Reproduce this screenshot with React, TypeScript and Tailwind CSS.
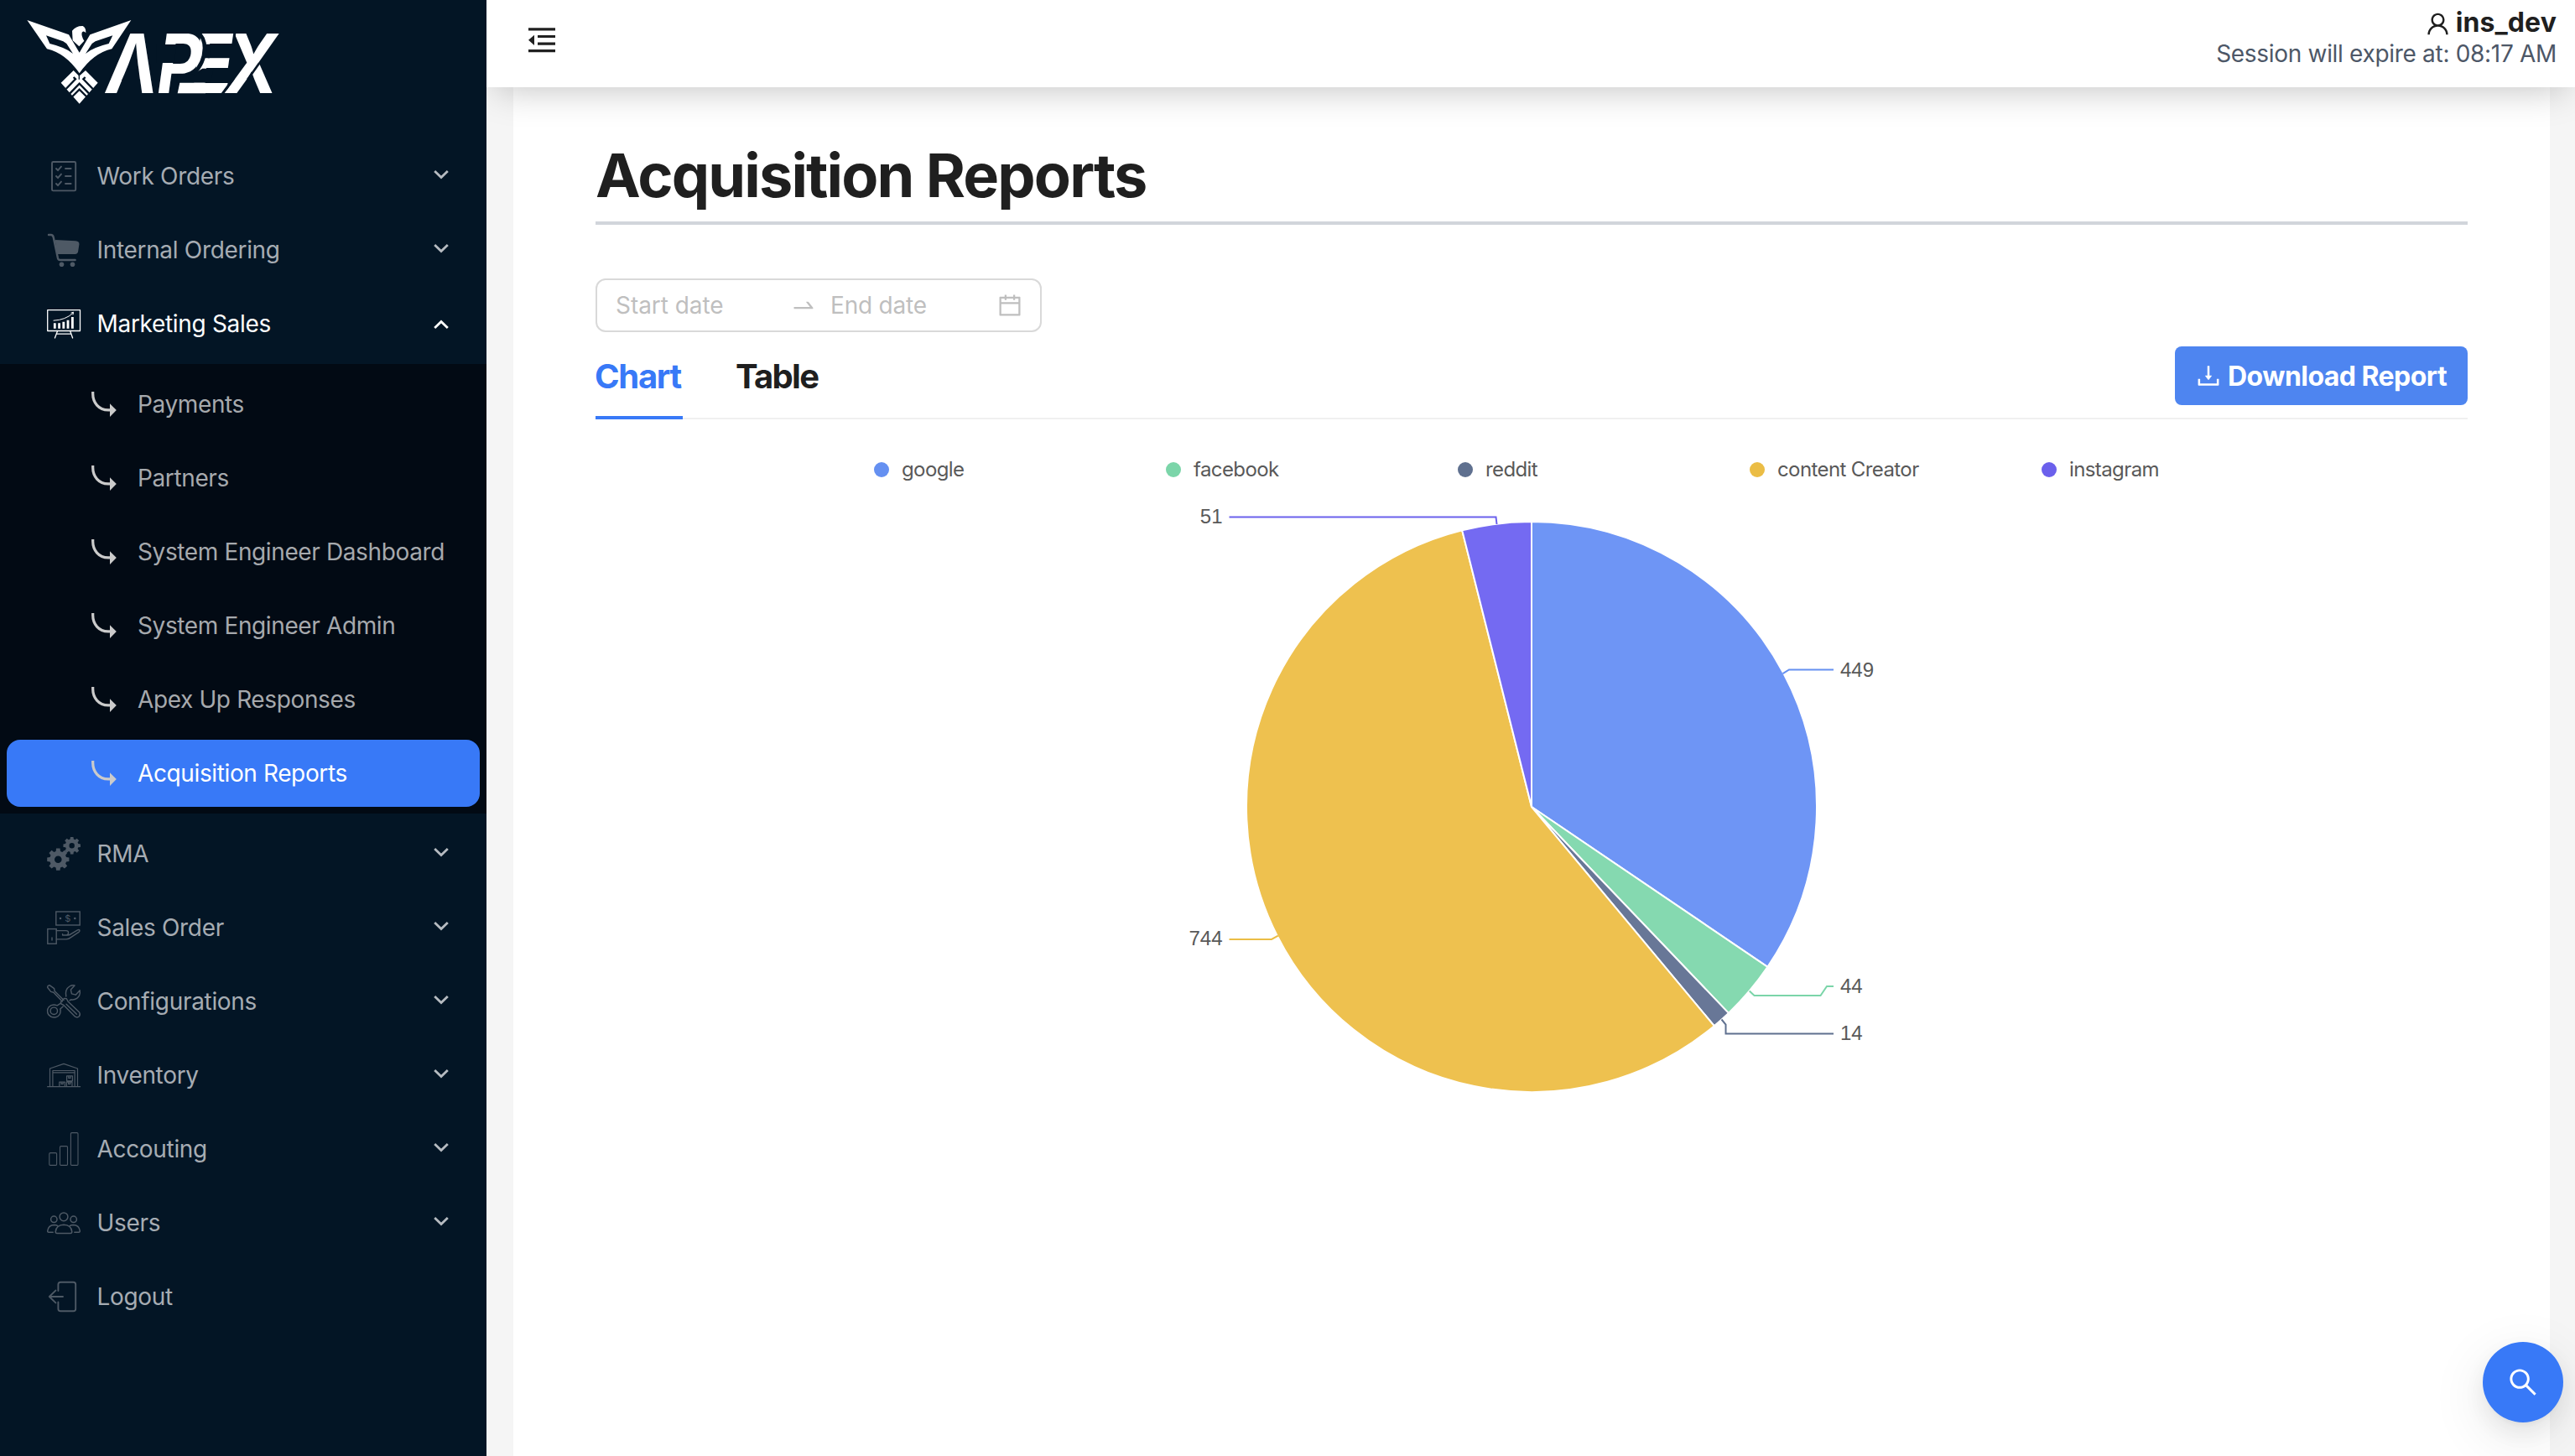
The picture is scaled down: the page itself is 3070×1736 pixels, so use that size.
import type { ReactNode } from "react";
import {
  AiOutlineCalendar,
  AiOutlineDownload,
  AiOutlineSearch,
  AiOutlineSwapRight,
  AiOutlineUser,
} from "react-icons/ai";

/* ---------- Logo ---------- */

function Logo() {
  return (
    <svg viewBox="0 0 960 360" className="h-[120px] w-[320px]" aria-label="Apex">
      <g fill="#fff">
        <path d="M37 24 L186 76 L224 140 L262 76 L409 24 L340 127 Q274 142 224 214 Q174 142 108 127 Z" />
        <path d="M198 62 Q212 44 236 45 Q248 50 247 70 Q240 60 233 68 Q230 80 241 98 L223 118 L200 97 Z" />
        <path d="M203 204 L223 224 L246 204 L290 248 L224 323 L158 248 Z" />
      </g>
      <g fill="#031525">
        <path d="M105 79 L166 100 L178 108 L201 144 Q176 122 118 108 Z" />
        <path d="M343 79 L281 100 L269 108 L246 144 Q271 122 329 108 Z" />
      </g>
      <g fill="none" stroke="#031525" strokeWidth="7">
        <path d="M176 270 L210 235 L203 228 M190 286 L224 251 L258 286 M272 270 L238 235 L245 228" />
        <path d="M196 300 L224 272 L252 300" />
        <path d="M223 222 V236" strokeWidth="4" />
      </g>
      <text
        y="0"
        x="0 216 362 510"
        transform="translate(320 286) scale(0.84 1)"
        fill="#fff"
        fontFamily="Inter, sans-serif"
        fontStyle="italic"
        fontWeight="700"
        fontSize="294"
      >
        APEX
      </text>
      {/* stencil gaps across the wordmark */}
      <g fill="#031525">
        <path d="M392 200H436L441 240H375Z" />
        <path d="M500 111H572L562 177H500Z" />
        <path d="M674 110H696L690 160H672Z" />
        <path d="M632 217L664 197H704L692 248H570L576 218Z" />
      </g>
      <path d="M583 248H675V286H575Z" fill="#fff" />
      <g fill="none" stroke="#031525">
        <path d="M646 66Q672 86 672 124Q671 180 630 218" strokeWidth="14" />
        <path d="M780 66L773 114" strokeWidth="9" />
        <path d="M733 291L776 232" strokeWidth="9" />
        <path d="M868 177L826 236" strokeWidth="8" />
      </g>
    </svg>
  );
}

/* ---------- Sidebar icons (40 x 40) ---------- */

function Glyph({ children, sw = 1.5 }: { children: ReactNode; sw?: number }) {
  return (
    <svg
      viewBox="0 0 40 40"
      className="size-10 shrink-0 overflow-visible"
      fill="none"
      stroke="currentColor"
      strokeWidth={sw}
      strokeLinecap="round"
      strokeLinejoin="round"
    >
      {children}
    </svg>
  );
}

function gear(cx: number, cy: number, r: number, hole: number) {
  const pts: string[] = [];
  const inner = r * 0.76;
  for (let i = 0; i < 8; i++) {
    const a = (i * Math.PI) / 4;
    const at = (rad: number, d: number) =>
      `${(cx + rad * Math.sin(a + d)).toFixed(2)} ${(cy - rad * Math.cos(a + d)).toFixed(2)}`;
    pts.push(at(inner, -0.27), at(r, -0.17), at(r, 0.17), at(inner, 0.27));
  }
  return `M${pts.join("L")}ZM${cx - hole} ${cy}a${hole} ${hole} 0 1 0 ${hole * 2} 0a${hole} ${hole} 0 1 0 ${-hole * 2} 0Z`;
}

const icons: Record<string, ReactNode> = {
  orders: (
    <Glyph sw={1.9}>
      <rect x="6" y="3" width="28.2" height="34.4" rx="1.5" />
      <path d="M11 11l2 2.2 4-4.6M11 20l2 2.2 4-4.6M11 29l2 2.2 4-4.6M22 11h6.6M22 20h6.6M22 29h6.6" />
    </Glyph>
  ),
  cart: (
    <Glyph sw={2.4}>
      <path d="M2 2h2.6q2.6 0 3.2 3.2L13 30q.5 2 2.6 2h18" />
      <path d="M9.6 8l24.6 1.2q4.6.4 4.2 4.4l-1.4 9q-.6 2.4-3 2.4H12Z" fill="currentColor" stroke="none" />
      <circle cx="17.5" cy="37.2" r="2.8" fill="currentColor" stroke="none" />
      <circle cx="30.5" cy="37.2" r="2.8" fill="currentColor" stroke="none" />
    </Glyph>
  ),
  board: (
    <Glyph sw={1.3}>
      <rect x=".7" y="3.7" width="38.8" height="24.8" />
      <path
        d="M7.9 19.3h2.8v6.4H7.9zM13.2 19.3h2.8v6.4h-2.8zM18.4 17.7h2.8v8h-2.8zM23.6 15.7h2.8v10h-2.8zM29 12h2.8v13.7H29z"
        fill="currentColor"
        stroke="none"
      />
      <path d="M8 16.2q14-.6 22.6-8.6M29 7l2.6-.8-.6 2.8" strokeWidth="1" />
      <path d="M12.4 29L9.4 37M27.8 29l2.8 8M11.2 32.2h17.8" />
    </Glyph>
  ),
  gears: (
    <Glyph>
      <path d={gear(13.3, 26.7, 13.3, 4.3)} fill="currentColor" fillRule="evenodd" stroke="none" />
      <path d={gear(29.7, 10.2, 10.4, 3.2)} fill="currentColor" fillRule="evenodd" stroke="none" />
    </Glyph>
  ),
  cash: (
    <Glyph sw={1.4}>
      <rect x="10.8" y="1" width="28.4" height="16" strokeLinejoin="miter" />
      <rect x=".8" y="21.6" width="10.4" height="17.6" strokeLinejoin="miter" />
      <path d="M6 32v3" />
      <path d="M11.3 23.6h11.4q3 .2 2.8 2.6 0 2.8-3.6 2.8H18.6v-1.2M22 29h3q2.4-.2 4-1.6l7.5-4.6q1.8-.7 2.4.4.4 1.2-1 2.2l-9 6q-3 2.5-6 2.5H11.3" />
      <circle cx="16" cy="9" r=".6" fill="currentColor" />
      <circle cx="33.3" cy="9" r=".6" fill="currentColor" />
      <text x="24.7" y="13" fontSize="11" textAnchor="middle" fill="currentColor" stroke="none" fontFamily="Inter, sans-serif">
        $
      </text>
    </Glyph>
  ),
  tools: (
    <Glyph sw={1.4}>
      <path d="M1 1.6l2-1 5.6 4 .6 3.2L20 18.4M1 1.6l-.4 1.6 4 5.2 3.2.8L18.2 20" />
      <path d="M18 19.6l2.4-3.2 3 .4 1.6 3.2 13.6 13q1.6 2.6-.2 4.8-2.2 2-4.8.4L20 24.4l-3-1.4-.6-2.4Z" />
      <path d="M23 23.2l12.4 12" />
      <path d="M22.8 14q-1.6-8.6 4.2-12Q30 .2 33 1l-4.6 5 1 4.8 4.8 1.4 5-5.4q1 6-3.6 9.6-3.2 2.2-7 1.4l-1.6 1" />
      <path d="M16.4 22.2l-4.2 2.6Q6 22.6 2.4 26.4-1 31 1.8 35.8 5.6 40 10.6 38.8q5.6-1.6 5.6-7.8l-.4-2 3.4-3" />
      <circle cx="8.3" cy="31.3" r="4.2" />
    </Glyph>
  ),
  warehouse: (
    <Glyph sw={1.2}>
      <path d="M.6 33.7h39M3.5 33.5V12L20 6.4 36.5 12v21.5" />
      <path d="M6.9 33.5V14.5h26.2v19M7 16.8h26M7 14.5h26" />
      <path d="M23.6 20.8h6.8v6h-6.8zM25.8 21v2.4h2.2V21M14.8 28.2h6.6v5.3h-6.6zM23.4 28.2h6.6v5.3h-6.6zM17 28.4v2h2.2v-2M25.6 28.4v2h2.2v-2" />
    </Glyph>
  ),
  bars: (
    <Glyph sw={1.1}>
      <rect x="2.8" y="24.6" width="8.8" height="14.8" rx="1.2" />
      <rect x="15.5" y="16.6" width="9" height="22.8" rx="1.2" />
      <rect x="28.4" y=".6" width="8.6" height="38.8" rx="1.2" />
    </Glyph>
  ),
  users: (
    <Glyph sw={1.5}>
      <circle cx="20" cy="12.8" r="4.9" />
      <circle cx="8.3" cy="15.8" r="3.7" />
      <circle cx="31.7" cy="15.8" r="3.7" />
      <path d="M12 32.6q-1.8 0-1.8-2 .8-8.2 9.8-8.4 9 .2 9.8 8.4 0 2-1.8 2Z" />
      <path d="M7.2 31.2H2Q.6 31.2.7 29.6 1.6 22.6 8.6 22.4q2.6 0 4.2 1.2M32.8 31.2H38q1.4 0 1.3-1.6-.9-7-7.9-7.2-2.6 0-4.2 1.2" />
    </Glyph>
  ),
  logout: (
    <Glyph sw={1.9}>
      <path d="M13.4 13V5.6q0-2.8 2.8-2.8h15.2q2.8 0 2.8 2.8v28.8q0 2.8-2.8 2.8H16.2q-2.8 0-2.8-2.8V26.4" />
      <path d="M19 20H2.8M10.4 12.6L2.8 20l7.6 7.4" />
    </Glyph>
  ),
};

function Chevron({ up = false }: { up?: boolean }) {
  return (
    <svg viewBox="0 0 20 12" className={up ? "mt-0.5 h-3 w-5 text-white" : "mb-1 h-3 w-5 rotate-180 text-[#b6bbc1]"}>
      <path d="M2.2 10L10 2.4 17.8 10" fill="none" stroke="currentColor" strokeWidth="2.8" />
    </svg>
  );
}

function SubArrow() {
  return (
    <svg viewBox="0 0 30 30" className="h-[30px] w-[30px]">
      <path d="M1.7 0V2.6C1.7 13 8.5 21.9 20 21.9H23" fill="none" stroke="#cbcbcb" strokeWidth="3.2" />
      <path d="M22 14.2L29.8 22 22 30Z" fill="#cbcbcb" />
    </svg>
  );
}

function MenuItem({ icon, label, open, leaf }: { icon: string; label: string; open?: boolean; leaf?: boolean }) {
  return (
    <div className={`flex h-20 items-center pr-[44px] pl-14 ${open ? "text-white" : "text-[#4e5965]"}`}>
      {icons[icon]}
      <span className={`ml-[19.5px] flex-1 tracking-[-0.32px] whitespace-nowrap ${open ? "text-white" : "text-[#a6acb3]"}`}>
        {label}
      </span>
      {!leaf && <Chevron up={open} />}
    </div>
  );
}

const children = [
  "Payments",
  "Partners",
  "System Engineer Dashboard",
  "System Engineer Admin",
  "Apex Up Responses",
  "Acquisition Reports",
];

function Sidebar() {
  return (
    <aside className="relative z-20 flex w-[580px] shrink-0 flex-col bg-[#031525] text-[28px]">
      <div className="h-[170px] pt-4 pl-5">
        <Logo />
      </div>
      <nav className="flex flex-col gap-2">
        <MenuItem icon="orders" label="Work Orders" />
        <MenuItem icon="cart" label="Internal Ordering" />
        <MenuItem icon="board" label="Marketing Sales" open />
        <div className="flex flex-col gap-2 bg-[#020a14] px-2 py-2">
          {children.map((c, i) => {
            const active = i === children.length - 1;
            return (
              <div
                key={c}
                className={`flex h-20 items-center rounded-2xl pl-[101px] ${active ? "bg-[#3879f7] text-white" : "text-[#a6a9ad]"}`}
              >
                <SubArrow />
                <span className="ml-[25px] tracking-[-0.38px] whitespace-nowrap">{c}</span>
              </div>
            );
          })}
        </div>
        <MenuItem icon="gears" label="RMA" />
        <MenuItem icon="cash" label="Sales Order" />
        <MenuItem icon="tools" label="Configurations" />
        <MenuItem icon="warehouse" label="Inventory" />
        <MenuItem icon="bars" label="Accouting" />
        <MenuItem icon="users" label="Users" />
        <MenuItem icon="logout" label="Logout" leaf />
      </nav>
    </aside>
  );
}

/* ---------- Header ---------- */

function Header() {
  return (
    <header className="relative z-10 flex h-[104px] justify-between bg-white pr-[22px] pl-[50px] shadow-[0_14px_44px_-12px_rgba(0,0,0,0.25)]">
      <svg viewBox="0 0 32 30" className="mt-[33px] h-[30px] w-8" fill="#202020">
        <path d="M0 0.3h32v3.2H0zM11 8.9h21v3.2H11zM11 17.5h21v3.2H11zM0 26.1h32v3.2H0zM7 8.7v12.2L0 14.8z" />
      </svg>
      <div className="flex flex-col items-end pt-[7px]">
        <div className="flex h-10 items-center gap-[5px] text-[#1f1f1f]">
          <AiOutlineUser className="mt-[3px] size-[33px]" />
          <span className="text-[32px] font-bold tracking-[0.1px]">ins_dev</span>
        </div>
        <div className="-mt-px h-9 text-[28px] leading-9 tracking-[-0.31px] text-[#4d5767]">Session will expire at: 08:17 AM</div>
      </div>
    </header>
  );
}

/* ---------- Chart ---------- */

const data = [
  { name: "google", value: 449, fill: "#6e95f5", dot: "#6590f1" },
  { name: "facebook", value: 44, fill: "#85d9b0", dot: "#7bd5a9" },
  { name: "reddit", value: 14, fill: "#687797", dot: "#5f708f" },
  { name: "content Creator", value: 744, fill: "#eec14f", dot: "#ebbd45" },
  { name: "instagram", value: 51, fill: "#746af2", dot: "#6b60ec" },
];

const labels = [
  { text: "449", x: 2194, y: 798, line: "2125.5,803.2 2133,798.5 2186,798.5" },
  { text: "44", x: 2194, y: 1175.5, line: "2085.7,1181.5 2091.5,1187 2170.5,1187 2178,1176 2186,1176" },
  { text: "14", x: 2194, y: 1231.5, line: "2052.5,1215.5 2057.5,1221.5 2057.5,1232.5 2186,1232.5" },
  { text: "744", x: 1457.5, y: 1118.5, line: "1523.8,1115.7 1516,1120 1465.5,1120", end: true },
  { text: "51", x: 1457.5, y: 615.5, line: "1784.5,625 1783.5,616.5 1465.5,616.5", end: true },
];

const lineColor = ["#6590f1", "#7bd5a9", "#5f708f", "#ebbd45", "#6b60ec"];

function Pie() {
  const cx = 1826;
  const cy = 962;
  const r = 340;
  const total = data.reduce((s, d) => s + d.value, 0);
  let acc = 0;
  const slices = data.map((d) => {
    const a0 = (acc / total) * Math.PI * 2;
    acc += d.value;
    const a1 = (acc / total) * Math.PI * 2;
    const p = (a: number) => `${cx + r * Math.sin(a)} ${cy - r * Math.cos(a)}`;
    return {
      fill: d.fill,
      path: `M${cx} ${cy}L${p(a0)}A${r} ${r} 0 ${a1 - a0 > Math.PI ? 1 : 0} 1 ${p(a1)}Z`,
    };
  });
  return (
    <svg viewBox="710 596 2232 740" className="h-[740px] w-[2232px]">
      {slices.map((s) => (
        <path key={s.fill} d={s.path} fill={s.fill} stroke="#fff" strokeWidth="2" strokeLinejoin="round" />
      ))}
      {labels.map((l, i) => (
        <g key={l.text}>
          <polyline points={l.line} fill="none" stroke={lineColor[i]} strokeWidth="2" />
          <text
            x={l.x}
            y={l.y + 8.5}
            textAnchor={l.end ? "end" : "start"}
            fontFamily="'Liberation Sans', Arial, sans-serif"
            fontSize="24"
            fill="#595959"
          >
            {l.text}
          </text>
        </g>
      ))}
    </svg>
  );
}

function Legend() {
  return (
    <div className="flex h-[96px] pt-6 pl-[332px]">
      {data.map((d) => (
        <div key={d.name} className="flex h-[72px] w-[348px] items-center gap-[15px]">
          <span className="size-[18px] rounded-full" style={{ backgroundColor: d.dot }} />
          <span className="text-[24px] tracking-[-0.6px] text-[#595959]">{d.name}</span>
        </div>
      ))}
    </div>
  );
}

/* ---------- Page ---------- */

export default function App() {
  return (
    <div className="flex h-[1736px] w-[3070px] overflow-hidden bg-[#f5f5f5] font-['Inter',sans-serif] text-[#1f1f1f]">
      <Sidebar />
      <div className="flex min-w-0 flex-1 flex-col">
        <Header />
        <main className="mr-[30px] ml-8 flex-1 bg-white px-[98px] pt-[65px]">
          <h1 className="h-[99px] border-b-4 border-[#d1d5db] text-[72px] leading-[80px] font-bold tracking-[-1.85px]">
            Acquisition Reports
          </h1>

          <div className="mt-16 flex h-16 w-[532px] items-center rounded-xl border-2 border-[#d9d9d9] pr-[20px] pl-[22px] text-[28px] text-[#bfbfbf]">
            <span className="w-[208px] tracking-[-0.05px]">Start date</span>
            <AiOutlineSwapRight className="size-8" />
            <span className="ml-4 flex-1 tracking-[-0.2px]">End date</span>
            <AiOutlineCalendar className="size-8" />
          </div>

          <div className="flex h-[104px] items-stretch border-b-2 border-[#f0f0f0] text-[40px] font-bold">
            <div className="-mb-0.5 flex w-[104px] items-center border-b-4 border-[#3879f7] pt-[6px] tracking-[-1.3px] text-[#3879f7]">
              <span className="-ml-px">Chart</span>
            </div>
            <div className="ml-[63px] flex items-center pt-1 tracking-[-1.7px]">Table</div>
            <button className="mt-[17px] ml-auto flex h-[70px] w-[349px] items-center gap-[6px] rounded-lg bg-[#4e85f0] pl-[23px] text-[32px] font-bold tracking-[-0.54px] whitespace-nowrap text-white">
              <AiOutlineDownload className="size-[34px]" />
              <span className="pt-0.5">Download Report</span>
            </button>
          </div>

          <Legend />
          <Pie />
        </main>
      </div>

      <button className="fixed right-[14px] bottom-10 z-30 flex size-24 items-center justify-center rounded-full bg-[#3879f7] text-white shadow-[0_12px_32px_0_rgba(0,0,0,0.08),0_6px_12px_-8px_rgba(0,0,0,0.12),0_18px_56px_16px_rgba(0,0,0,0.05)]">
        <AiOutlineSearch className="size-10" />
      </button>
    </div>
  );
}
